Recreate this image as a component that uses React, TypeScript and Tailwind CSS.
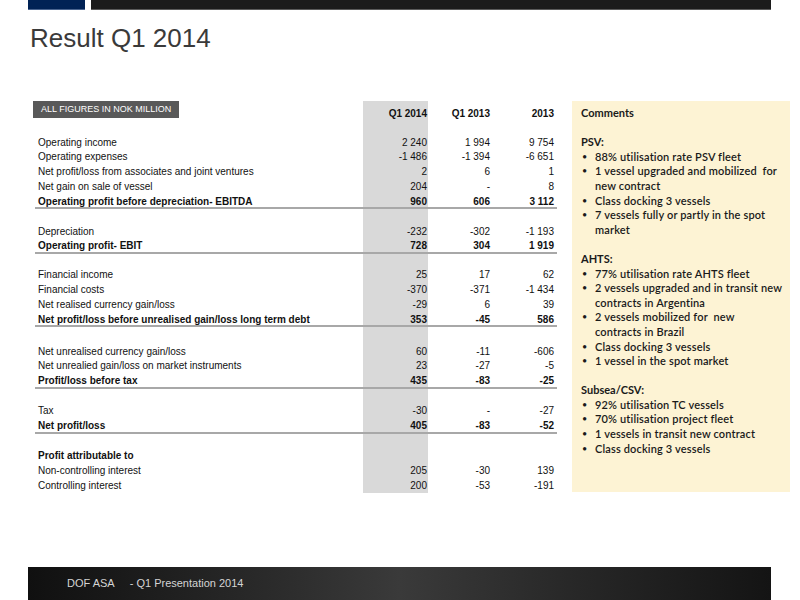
type Row = {
  label: string;
  v: [string, string, string];
  bold?: boolean;
  line?: boolean;
  before?: number;
};

const rows: Row[] = [
  { label: 'Operating income', v: ['2 240', '1 994', '9 754'] },
  { label: 'Operating expenses', v: ['-1 486', '-1 394', '-6 651'] },
  { label: 'Net profit/loss from associates and joint ventures', v: ['2', '6', '1'] },
  { label: 'Net gain on sale of vessel', v: ['204', '-', '8'] },
  { label: 'Operating profit before depreciation- EBITDA', v: ['960', '606', '3 112'], bold: true, line: true },
  { label: 'Depreciation', v: ['-232', '-302', '-1 193'], before: 15.25 },
  { label: 'Operating profit- EBIT', v: ['728', '304', '1 919'], bold: true, line: true },
  { label: 'Financial income', v: ['25', '17', '62'], before: 14.25 },
  { label: 'Financial costs', v: ['-370', '-371', '-1 434'] },
  { label: 'Net realised currency gain/loss', v: ['-29', '6', '39'] },
  { label: 'Net profit/loss before unrealised gain/loss long term debt', v: ['353', '-45', '586'], bold: true, line: true },
  { label: 'Net unrealised currency gain/loss', v: ['60', '-11', '-606'], before: 17.25 },
  { label: 'Net unrealied gain/loss on market instruments', v: ['23', '-27', '-5'] },
  { label: 'Profit/loss before tax', v: ['435', '-83', '-25'], bold: true, line: true },
  { label: 'Tax', v: ['-30', '-', '-27'], before: 15.25 },
  { label: 'Net profit/loss', v: ['405', '-83', '-52'], bold: true, line: true },
  { label: 'Profit attributable to', v: ['', '', ''], bold: true, before: 15.5 },
  { label: 'Non-controlling interest', v: ['205', '-30', '139'] },
  { label: 'Controlling interest', v: ['200', '-53', '-191'] },
];

const comments: { title: string; items: string[][] }[] = [
  {
    title: 'PSV:',
    items: [
      ['88% utilisation rate PSV fleet'],
      ['1 vessel upgraded and mobilized  for', 'new contract'],
      ['Class docking 3 vessels'],
      ['7 vessels fully or partly in the spot', 'market'],
    ],
  },
  {
    title: 'AHTS:',
    items: [
      ['77% utilisation rate AHTS fleet'],
      ['2 vessels upgraded and in transit new', 'contracts in Argentina'],
      ['2 vessels mobilized for  new', 'contracts in Brazil'],
      ['Class docking 3 vessels'],
      ['1 vessel in the spot market'],
    ],
  },
  {
    title: 'Subsea/CSV:',
    items: [
      ['92% utilisation TC vessels'],
      ['70% utilisation project fleet'],
      ['1 vessels in transit new contract'],
      ['Class docking 3 vessels'],
    ],
  },
];

const Spacer = ({ h }: { h: number }) => (
  <div className="flex" style={{ height: h }}>
    <div className="w-[328px]" />
    <div className="w-[65px] bg-[#d9d9d9]" />
  </div>
);

const App = () => {
  return (
    <div className="w-[800px] h-[600px] bg-white flex flex-col overflow-hidden font-['Liberation_Sans',Arial,sans-serif]">
      {/* Top bars */}
      <div className="flex gap-[6px] pl-[28px]">
        <div className="w-[57px] h-[10px] bg-[#002255] border-b border-[#4a6590]" />
        <div className="w-[680px] h-[10px] bg-[#1b1b1b] border-b border-[#5a5a5a]" />
      </div>

      {/* Title */}
      <h1 className="mt-[13px] pl-[30px] text-[26px] leading-[30px] text-[#3a3a3a]">Result Q1 2014</h1>

      {/* Body */}
      <div className="mt-[48px] flex pl-[35px]">
        {/* Table */}
        <div className="w-[522px] text-[10px] text-[#111]">
          <div className="flex h-[24px]">
            <div className="w-[328px]">
              <div className="inline-block ml-[-2px] bg-[#595959] text-white text-[9px] h-[17px] leading-[17px] px-[8px]">
                ALL FIGURES IN NOK MILLION
              </div>
            </div>
            <div className="w-[65px] bg-[#d9d9d9] pr-[1px] flex items-center justify-end font-bold">Q1 2014</div>
            <div className="w-[63px] pr-[1px] flex items-center justify-end font-bold">Q1 2013</div>
            <div className="w-[66px] pr-[3px] flex items-center justify-end font-bold">2013</div>
          </div>
          <Spacer h={10.6} />
          {rows.map((r) => (
            <div key={r.label}>
              {r.before ? <Spacer h={r.before} /> : null}
              <div
                className={`flex h-[14.75px] leading-[14.75px] ${r.bold ? 'font-bold' : ''} ${
                  r.line ? 'border-b-2 border-[#a8a8a8]' : ''
                }`}
              >
                <div className="w-[328px] pl-[3px] whitespace-nowrap">{r.label}</div>
                <div className="w-[65px] bg-[#d9d9d9] pr-[1px] text-right">{r.v[0]}</div>
                <div className="w-[63px] pr-[1px] text-right">{r.v[1]}</div>
                <div className="w-[66px] pr-[3px] text-right">{r.v[2]}</div>
              </div>
            </div>
          ))}
        </div>

        {/* Comments */}
        <div className="ml-[15px] w-[218px] h-[391px] bg-[#fdf3d4] pt-[5px] pl-[9px] text-[11px] leading-[14.6px] text-[#1a1a1a] font-['Lato',sans-serif]">
          <div className="font-bold">Comments</div>
          {comments.map((c) => (
            <div key={c.title} className="mt-[14.6px]">
              <div className="font-bold">{c.title}</div>
              {c.items.map((item) => (
                <div key={item[0]} className="flex font-semibold tracking-[0.15px]">
                  <span className="w-[14px] pl-[1px] text-[9px] font-normal">•</span>
                  <div className="whitespace-pre">
                    {item.map((l) => (
                      <div key={l}>{l}</div>
                    ))}
                  </div>
                </div>
              ))}
            </div>
          ))}
        </div>
      </div>

      {/* Footer */}
      <div className="mt-auto ml-[28px] w-[743px] h-[33px] flex items-center pl-[39px] bg-linear-to-r from-[#101010] via-[#3a3a3a] to-[#141414] text-[11px] text-[#d4d4d4]">
        <span>DOF ASA</span>
        <span className="ml-[15px]">- Q1 Presentation 2014</span>
      </div>
    </div>
  );
};

export default App;
